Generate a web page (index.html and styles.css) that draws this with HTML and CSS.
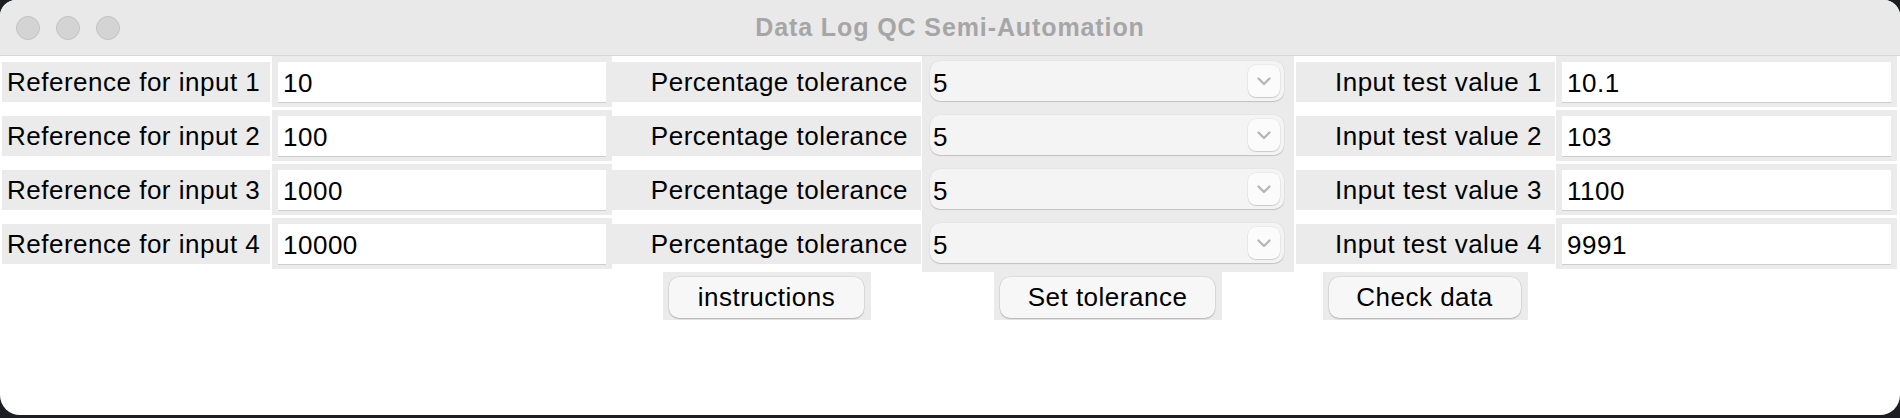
FILE: index.html
```html
<!DOCTYPE html>
<html>
<head>
<meta charset="utf-8">
<title>Data Log QC Semi-Automation</title>
<link rel="stylesheet" href="styles.css">
</head>
<body>
<div class="window">
  <div class="titlebar">
    <div class="lights"><span class="light"></span><span class="light"></span><span class="light"></span></div>
    <div class="title">Data Log QC Semi-Automation</div>
    <div></div>
  </div>
  <div class="grid">
    <div class="label">Reference for input 1</div>
    <div class="field"><input type="text" value="10" readonly></div>
    <div class="label right">Percentage tolerance</div>
    <div class="combo-cell"><div class="combo"><span class="val">5</span><span class="chev"><svg width="14" height="9" viewBox="0 0 14 9"><polyline points="1.5,1.5 7,7 12.5,1.5" fill="none" stroke="#b4b4b4" stroke-width="2.2" stroke-linecap="round" stroke-linejoin="round"/></svg></span></div></div>
    <div class="label right r3">Input test value 1</div>
    <div class="field last"><input type="text" value="10.1" readonly></div>

    <div class="label">Reference for input 2</div>
    <div class="field"><input type="text" value="100" readonly></div>
    <div class="label right">Percentage tolerance</div>
    <div class="combo-cell"><div class="combo"><span class="val">5</span><span class="chev"><svg width="14" height="9" viewBox="0 0 14 9"><polyline points="1.5,1.5 7,7 12.5,1.5" fill="none" stroke="#b4b4b4" stroke-width="2.2" stroke-linecap="round" stroke-linejoin="round"/></svg></span></div></div>
    <div class="label right r3">Input test value 2</div>
    <div class="field last"><input type="text" value="103" readonly></div>

    <div class="label">Reference for input 3</div>
    <div class="field"><input type="text" value="1000" readonly></div>
    <div class="label right">Percentage tolerance</div>
    <div class="combo-cell"><div class="combo"><span class="val">5</span><span class="chev"><svg width="14" height="9" viewBox="0 0 14 9"><polyline points="1.5,1.5 7,7 12.5,1.5" fill="none" stroke="#b4b4b4" stroke-width="2.2" stroke-linecap="round" stroke-linejoin="round"/></svg></span></div></div>
    <div class="label right r3">Input test value 3</div>
    <div class="field last"><input type="text" value="1100" readonly></div>

    <div class="label">Reference for input 4</div>
    <div class="field"><input type="text" value="10000" readonly></div>
    <div class="label right">Percentage tolerance</div>
    <div class="combo-cell"><div class="combo"><span class="val">5</span><span class="chev"><svg width="14" height="9" viewBox="0 0 14 9"><polyline points="1.5,1.5 7,7 12.5,1.5" fill="none" stroke="#b4b4b4" stroke-width="2.2" stroke-linecap="round" stroke-linejoin="round"/></svg></span></div></div>
    <div class="label right r3">Input test value 4</div>
    <div class="field last"><input type="text" value="9991" readonly></div>

    <div class="btn-cell c3"><button class="btn w1">instructions</button></div>
    <div class="btn-cell c4"><button class="btn w2">Set tolerance</button></div>
    <div class="btn-cell c5"><button class="btn w3">Check data</button></div>
  </div>
</div>
</body>
</html>
```
FILE: styles.css
```css
* { box-sizing: border-box; }
html, body { margin: 0; padding: 0; }
body {
  background: #1d1e23;
  width: 1900px;
  height: 418px;
  overflow: hidden;
  font-family: "Liberation Sans", Arial, sans-serif;
}
.window {
  width: 1900px;
  height: 415px;
  background: #ffffff;
  border-radius: 16px 16px 20px 20px;
  overflow: hidden;
  display: flex;
  flex-direction: column;
}
.titlebar {
  height: 56px;
  flex: none;
  background: #e9e9e9;
  border-bottom: 1px solid #d6d6d6;
  display: grid;
  grid-template-columns: 1fr auto 1fr;
  align-items: center;
}
.lights { display: flex; gap: 16px; padding-left: 16px; }
.light {
  width: 24px;
  height: 24px;
  border-radius: 50%;
  background: #d4d4d4;
  border: 1px solid #c3c3c3;
}
.title {
  font-weight: bold;
  font-size: 25px;
  color: #a6a6a6;
  letter-spacing: 0.9px;
}
.grid {
  display: grid;
  grid-template-columns: 272px 340px 310px 372px 262px 1fr;
  grid-template-rows: repeat(4, 54px) 48px;
  font-size: 26px;
  letter-spacing: 0.5px;
  color: #000;
}
.label {
  background: #ebebeb;
  margin: 6px 2px 8px 2px;
  height: 40px;
  line-height: 40px;
  padding: 0 5px;
  white-space: nowrap;
}
.label.right {
  text-align: right;
  margin: 6px 1px 8px 0;
  padding-right: 13px;
}
.label.right.r3 { margin: 6px 1px 8px 2px; }
.field {
  background: #ebebeb;
  height: 51px;
  padding: 6px 6px 5px;
}
.field.last { margin-right: 3px; }
.field input {
  display: block;
  width: 100%;
  height: 40px;
  border: 0;
  margin: 0;
  background: #ffffff;
  font: inherit;
  letter-spacing: inherit;
  color: #000;
  padding: 2px 5px 0;
  box-shadow: 0 1px 0 #cdcdcd;
  outline: none;
}
.combo-cell {
  background: #ebebeb;
  padding: 5px 10px 0 8px;
}
.combo {
  height: 40px;
  border-radius: 10px;
  background: #f4f4f4;
  box-shadow: 0 1px 1px rgba(0,0,0,0.16), 0 0 0 0.5px rgba(0,0,0,0.05);
  display: flex;
  align-items: center;
  justify-content: space-between;
  padding: 0 4px 0 3px;
}
.combo .val { line-height: 40px; padding-top: 3px; }
.chev {
  width: 32px;
  height: 32px;
  border-radius: 8px;
  background: #fbfbfb;
  box-shadow: 0 1px 1px rgba(0,0,0,0.14), 0 0 0 0.5px rgba(0,0,0,0.08);
  display: flex;
  align-items: center;
  justify-content: center;
}
.btn-cell {
  grid-row: 5;
  justify-self: center;
  background: #ebebeb;
  padding: 5px 7px 2px 6px;
  height: 48px;
}
.c3 { grid-column: 3; }
.c4 { grid-column: 4; }
.c5 { grid-column: 5; }
.btn {
  height: 41px;
  border: 0;
  border-radius: 10px;
  background: #f7f7f7;
  box-shadow: 0 1px 1.5px rgba(0,0,0,0.2), 0 0 0 0.5px rgba(0,0,0,0.1);
  font: inherit;
  letter-spacing: inherit;
  color: #000;
  padding: 0;
  display: flex;
  align-items: center;
  justify-content: center;
}
.w1 { width: 195px; }
.w2 { width: 215px; }
.w3 { width: 192px; }
```
